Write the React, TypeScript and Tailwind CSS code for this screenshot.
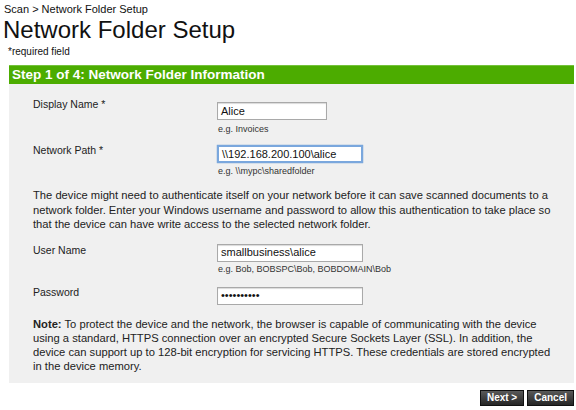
import React from 'react';

const sans = { fontFamily: '"Liberation Sans", Arial, sans-serif' };

// text field look from the printer's web page
const Field = ({ value, wide = true, focus = false }: { value: string; wide?: boolean; focus?: boolean }) => (
  <div
    className={`h-[18px] ${wide ? 'w-[146px]' : 'w-[110px]'} bg-white flex items-center px-[3px] text-[11px] text-[#111] ${
      focus
        ? 'border-2 border-[#7aa7dd] shadow-[0_0_1px_#4a86d0]'
        : 'border border-[#a9a9a9] shadow-[inset_0_1px_1px_rgba(0,0,0,0.15)]'
    }`}
  >
    {value}
  </div>
);

const Hint = ({ children }: { children: React.ReactNode }) => (
  <div className="text-[9px] leading-[13px] text-[#333] pl-[1px]">{children}</div>
);

const Button = ({ children }: { children: React.ReactNode }) => (
  <button className="h-[16px] px-[6px] bg-gradient-to-b from-[#5a5a5a] to-[#262626] border border-[#111] text-white text-[10px] font-bold leading-none">
    {children}
  </button>
);

export default function App() {
  return (
    <div className="w-[576px] h-[410px] bg-white text-[#111] pt-[3px] overflow-hidden" style={sans}>
      <div className="pl-[4px] text-[11px] leading-[13px]">Scan &gt; Network Folder Setup</div>
      <h1 className="pl-[3px] text-[24px] leading-[27px]">Network Folder Setup</h1>
      <div className="pl-[8px] text-[10px] leading-[12px] mt-[3px]">*required field</div>

      <div className="ml-[9px] mr-[2px] mt-[7px]">
        <div className="h-[19px] bg-[#4cac00] border-t border-[#74c23a] flex items-center pl-[3px] text-white font-bold text-[13.5px]">
          Step 1 of 4: Network Folder Information
        </div>

        <div className="bg-[#f0f0f0] pl-[24px] pt-[13px] pb-[10px] text-[10.5px] text-[#222]">
          <div className="flex">
            <div className="w-[184px] leading-[14px]">Display Name *</div>
            <div className="pt-[5px]">
              <Field value="Alice" wide={false} />
              <div className="mt-[3px]">
                <Hint>e.g. Invoices</Hint>
              </div>
            </div>
          </div>

          <div className="flex mt-[7px]">
            <div className="w-[184px] leading-[14px]">Network Path *</div>
            <div className="pt-[2px]">
              <Field value={'\\\\192.168.200.100\\alice'} focus />
              <div className="mt-[2px]">
                <Hint>e.g. \\mypc\sharedfolder</Hint>
              </div>
            </div>
          </div>

          <p className="mt-[10px] w-[528px] leading-[14.5px] text-[11.2px]">
            The device might need to authenticate itself on your network before it can save scanned documents to a
            network folder. Enter your Windows username and password to allow this authentication to take place so
            that the device can have write access to the selected network folder.
          </p>

          <div className="flex mt-[11px]">
            <div className="w-[184px] leading-[14px]">User Name</div>
            <div className="pt-[1px]">
              <Field value={'smallbusiness\\alice'} />
              <div className="mt-[1px]">
                <Hint>e.g. Bob, BOBSPC\Bob, BOBDOMAIN\Bob</Hint>
              </div>
            </div>
          </div>

          <div className="flex mt-[9px]">
            <div className="w-[184px] leading-[14px]">Password</div>
            <div className="pt-[2px]">
              <Field value="••••••••••" />
            </div>
          </div>

          <p className="mt-[12px] w-[528px] leading-[14px] text-[11.2px]">
            <span className="font-bold">Note:</span> To protect the device and the network, the browser is capable of
            communicating with the device using a standard, HTTPS connection over an encrypted Secure Sockets Layer
            (SSL). In addition, the device can support up to 128-bit encryption for servicing HTTPS. These credentials
            are stored encrypted in the device memory.
          </p>
        </div>

        <div className="flex justify-end gap-[3px] pt-[7px]">
          <Button>Next &gt;</Button>
          <Button>Cancel</Button>
        </div>
      </div>
    </div>
  );
}
